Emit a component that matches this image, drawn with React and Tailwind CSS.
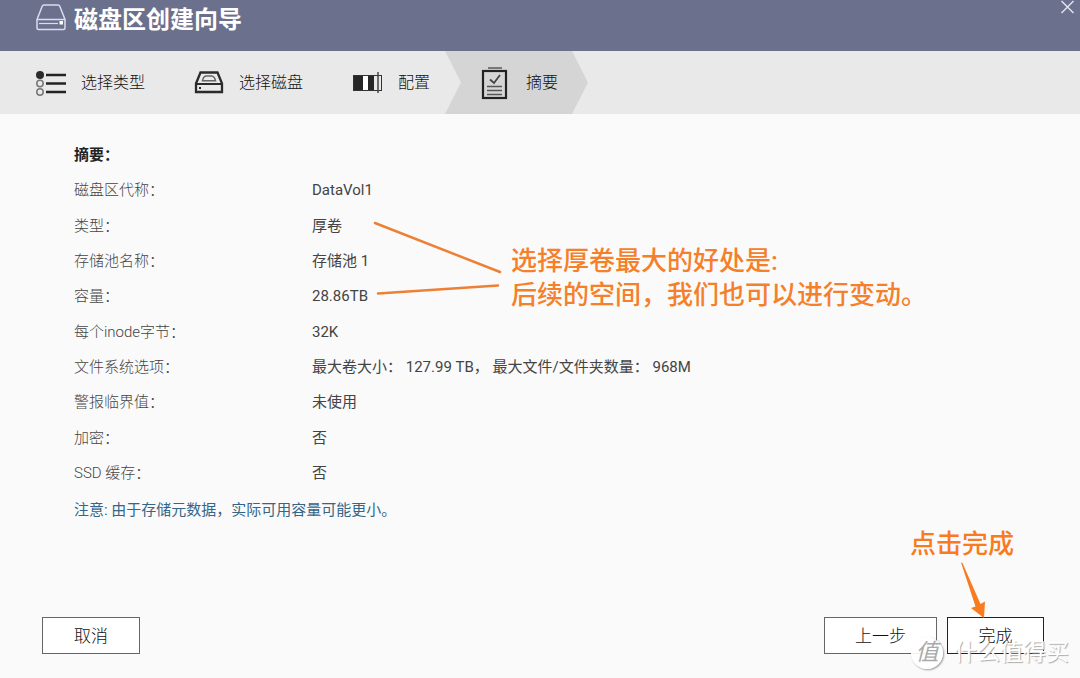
const steps = [
  { id: "type", label: "选择类型", icon: TypeIcon, className: "w-[159px] pl-[35px]" },
  { id: "disk", label: "选择磁盘", icon: DiskIcon, className: "w-[158px] pl-[34px]" },
  { id: "config", label: "配置", icon: ConfigIcon, className: "w-[128px] pl-[35px]" },
  {
    id: "summary",
    label: "摘要",
    icon: SummaryIcon,
    active: true,
    className:
      "w-[143px] pl-[35px] bg-[#d5d5d5] [clip-path:polygon(0_0,127px_0,100%_50%,127px_100%,0_100%,16px_50%)]",
  },
];

const rows = [
  ["磁盘区代称：", "DataVol1"],
  ["类型：", "厚卷"],
  ["存储池名称：", "存储池 1"],
  ["容量：", "28.86TB"],
  ["每个inode字节：", "32K"],
  ["文件系统选项：", "最大卷大小： 127.99 TB， 最大文件/文件夹数量： 968M"],
  ["警报临界值：", "未使用"],
  ["加密：", "否"],
  ["SSD 缓存：", "否"],
];

function VolumeIcon() {
  return (
    <svg width="30" height="27" viewBox="0 0 30 27" fill="none" stroke="#d9dcec" strokeWidth="1.5" aria-hidden="true">
      <path d="M1 15.5 6.2 2.2Q6.7 1 8 1h14q1.3 0 1.8 1.2L29 15.5V24q0 1.500-1.500 1.500h-25Q1 25.500 1 24z" />
      <path d="M1 15.500h28" />
      <path d="M3 19.500h19" strokeWidth="1.200" />
      <rect x="23.500" y="17" width="3.500" height="3.500" fill="#fff" stroke="none" />
    </svg>
  );
}

function TypeIcon() {
  return (
    <svg width="32" height="32" viewBox="0 0 32 32" fill="none" aria-hidden="true">
      <circle cx="5" cy="8" r="4" fill="#2b2b2b" />
      <circle cx="5" cy="16.500" r="3.200" stroke="#777" strokeWidth="1.500" />
      <circle cx="5" cy="25" r="3.200" stroke="#777" strokeWidth="1.500" />
      <path d="M11 8h20M11 16.500h20M11 25h20" stroke="#222" strokeWidth="2.400" />
    </svg>
  );
}

function DiskIcon() {
  return (
    <svg width="32" height="32" viewBox="0 0 32 32" fill="none" stroke="#2b2b2b" aria-hidden="true">
      <path d="M3 16.500 7.500 5.500h17L29 16.500V25H3z" strokeWidth="2.300" />
      <path d="M3 17h26" strokeWidth="2" />
      <path d="M9.500 13.700q1-4.700 4-4.700h5q3 .2 4 4.700z" stroke="#666" strokeWidth="1.500" />
      <rect x="6" y="20" width="2" height="2" fill="#2b2b2b" stroke="none" />
    </svg>
  );
}

function ConfigIcon() {
  return (
    <svg width="32" height="32" viewBox="0 0 32 32" fill="none" aria-hidden="true">
      <path d="M1 8h10v16H1zM16 8h6v16h-6z" fill="#262626" />
      <rect x="1.500" y="8.500" width="28" height="15" stroke="#333" />
      <path d="M11 9h5v14h-5z" fill="#fff" />
      <path d="M26 5v21" stroke="#444" strokeWidth="1.500" />
    </svg>
  );
}

function SummaryIcon() {
  return (
    <svg width="32" height="34" viewBox="0 0 32 34" fill="none" aria-hidden="true">
      <path d="M8 2h14" stroke="#777" strokeWidth="2" />
      <rect x="3" y="5" width="23" height="27" stroke="#222" strokeWidth="2.200" />
      <path d="m10 13.500 4 3.500 6-8" stroke="#444" strokeWidth="1.800" />
      <path d="M7 20.500h15M7 24.500h15M7 28.500h15" stroke="#555" strokeWidth="1.300" />
    </svg>
  );
}

function Step({ step }) {
  const Icon = step.icon;
  return (
    <li
      aria-current={step.active ? "step" : undefined}
      className={`flex h-full shrink-0 items-center gap-[14px] whitespace-nowrap pt-px text-base font-light text-[#111] ${step.className}`}
    >
      <Icon />
      {step.label}
    </li>
  );
}

function WizardButton({ children, className }) {
  return (
    <button type="button" className={`h-[37px] border bg-white text-[17px] font-light leading-6 text-[#111] ${className}`}>
      {children}
    </button>
  );
}

function VolumeNote() {
  return (
    <div className="absolute left-[372px] top-[106px] flex items-start gap-[9px]">
      <svg width="130" height="80" viewBox="0 0 130 80" fill="none" stroke="#ee8036" strokeWidth="2.500" strokeLinecap="round" aria-hidden="true">
        <path d="M3 3 128 52M6 73.500 126 65.500" />
      </svg>
      <p className="mt-6 whitespace-nowrap text-[26px] font-medium leading-[34px] text-[#f58029]">
        选择厚卷最大的好处是:
        <br />
        后续的空间，我们也可以进行变动。
      </p>
    </div>
  );
}

function FinishNote() {
  return (
    <div className="pointer-events-none absolute -top-[91px] right-[30px] z-10 text-[26px] font-medium leading-9 text-[#f97a1f]">
      点击完成
      <svg className="ml-[51px]" width="26" height="56" viewBox="0 0 26 56" fill="#f97a1f" aria-hidden="true">
        <path d="M0 .5 1.500 1 19.500 42 24 39.500 23 56 10 46 14.500 44.500z" />
      </svg>
    </div>
  );
}

function Watermark() {
  return (
    <div className="pointer-events-none absolute -bottom-[15px] right-[11px] flex items-center gap-[11px] whitespace-nowrap text-[23px] leading-8 text-white [text-shadow:1px_1px_1px_#aaa]">
      <span className="flex size-8 items-center justify-center rounded-full bg-white/90 italic text-[#aaa] shadow-[1px_1px_2px_#999] [text-shadow:none]">
        值
      </span>
      什么值得买
    </div>
  );
}

export default function App() {
  return (
    <div className="flex min-h-screen flex-col overflow-x-hidden bg-[#fafafa] font-[Roboto,'Noto_Sans_CJK_SC',sans-serif] text-[15px] text-[#333]">
      <header className="flex h-[51px] items-start justify-between bg-[#6b718d] pl-9">
        <div className="flex items-start gap-2 pt-1">
          <VolumeIcon />
          <h1 className="text-2xl font-bold leading-8 text-white">磁盘区创建向导</h1>
        </div>
        <button type="button" aria-label="关闭" className="mr-[5px]">
          <svg width="15" height="15" viewBox="0 0 15 15" stroke="#e0e3f0" strokeWidth="1.500" aria-hidden="true">
            <path d="m1.500 1 12 12m0-12-12 12" />
          </svg>
        </button>
      </header>

      <ol className="flex h-[63px] bg-[#e9e9e9]">
        {steps.map((step) => (
          <Step key={step.id} step={step} />
        ))}
      </ol>

      <main className="relative px-[74px] pt-[29px]">
        <h2 className="font-bold leading-6 text-[#222]">摘要：</h2>
        <table className="mt-1.5 h-[318px] w-full text-left">
          <tbody>
            {rows.map(([label, value]) => (
              <tr key={label}>
                <th scope="row" className="w-[238px] p-0 font-light text-[#444]">{label}</th>
                <td className="p-0 text-[#444]">{value}</td>
              </tr>
            ))}
          </tbody>
        </table>
        <p className="mt-[7px] leading-6 text-[#336688]">注意: 由于存储元数据，实际可用容量可能更小。</p>
        <VolumeNote />
      </main>

      <footer className="relative mx-[36px] mb-6 mt-auto flex justify-between pl-[6px]">
        <WizardButton className="w-[98px] border-[#666]">取消</WizardButton>
        <div className="flex gap-[10px]">
          <WizardButton className="w-[113px] border-[#666]">上一步</WizardButton>
          <WizardButton className="w-[97px] border-[#222]">完成</WizardButton>
        </div>
        <FinishNote />
        <div className="absolute -right-9 bottom-0">
          <Watermark />
        </div>
      </footer>
    </div>
  );
}
